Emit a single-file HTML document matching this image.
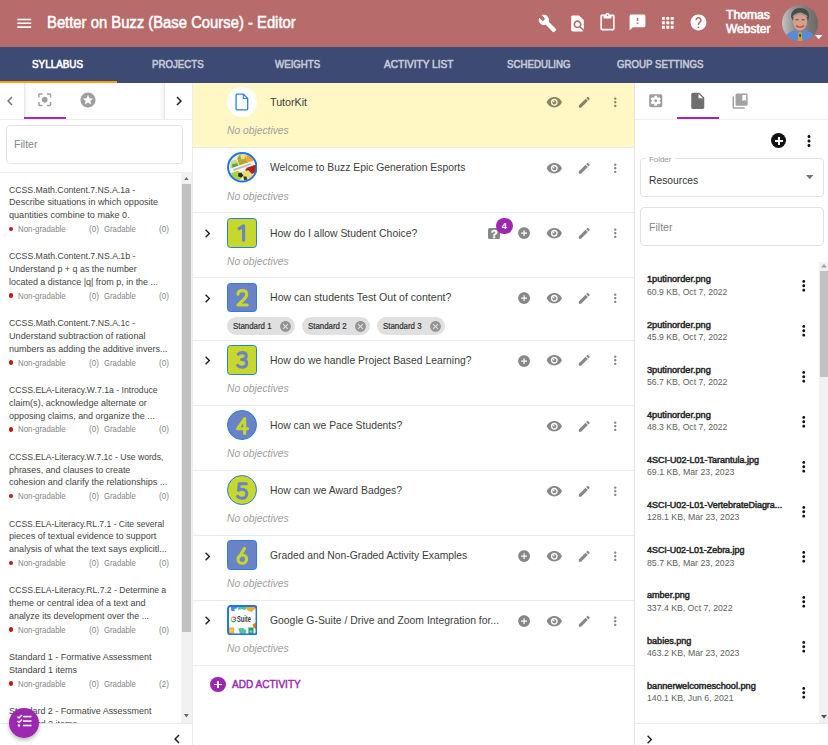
<!DOCTYPE html>
<html><head><meta charset="utf-8">
<style>
*{box-sizing:border-box;margin:0;padding:0}
html,body{width:828px;height:745px;overflow:hidden;background:#fff;font-family:"Liberation Sans",sans-serif}
body{position:relative}
.a{position:absolute}
.t{white-space:nowrap;transform-origin:0 50%}
</style></head><body>

<div class="a" style="left:0;top:0;width:828px;height:47px;background:#b76b6a"></div>
<svg class="a" style="left:14.65px;top:13.75px" width="18.5" height="18.5" viewBox="0 0 24 24"><path fill="#fff" d="M3 18h18v-2H3v2zm0-5h18v-2H3v2zm0-7v2h18V6H3z"/></svg>
<div class="a t" style="left:47.30px;top:12.86px;font-size:15.8px;line-height:20.54px;color:#fff;font-weight:normal;font-style:normal;transform:scaleX(0.9380);-webkit-text-stroke:0.5px #fff">Better on Buzz (Base Course) - Editor</div>
<svg class="a" style="left:538.10px;top:13.50px" width="19" height="19" viewBox="0 0 24 24"><path fill="#fff" d="M22.7 19l-9.1-9.1c.9-2.3.4-5-1.5-6.9-2-2-5-2.4-7.4-1.3L9 6 6 9 1.6 4.7C.4 7.1.9 10.1 2.9 12.1c1.9 1.9 4.6 2.4 6.9 1.5l9.1 9.1c.4.4 1 .4 1.4 0l2.3-2.3c.5-.4.5-1.1.1-1.4z"/></svg>
<svg class="a" style="left:568.00px;top:13.50px" width="19" height="19" viewBox="0 0 24 24"><path fill="#fff" d="M20 19.59V8l-6-6H6c-1.1 0-1.99.9-1.99 2L4 20c0 1.1.89 2 1.99 2H18c.45 0 .85-.15 1.19-.4l-4.43-4.43c-.8.52-1.740.83-2.76.83-2.76 0-5-2.24-5-5s2.24-5 5-5 5 2.24 5 5c0 1.02-.31 1.96-.83 2.75L20 19.59zM9 13c0 1.66 1.34 3 3 3s3-1.34 3-3-1.34-3-3-3-3 1.34-3 3z"/></svg>
<svg class="a" style="left:597.90px;top:12.90px" width="19" height="19" viewBox="0 0 24 24"><path fill="#fff" d="M19 2h-4.18C14.4.84 13.3 0 12 0S9.6.84 9.18 2H5c-1.1 0-2 .9-2 2v16c0 1.1.9 2 2 2h14c1.1 0 2-.9 2-2V4c0-1.1-.9-2-2-2zm-7 0c.55 0 1 .45 1 1s-.45 1-1 1-1-.45-1-1 .45-1 1-1zm7 18H5V4h2v3h10V4h2v16z"/></svg>
<svg class="a" style="left:628.40px;top:13.40px" width="19" height="19" viewBox="0 0 24 24"><path fill="#fff" d="M20 2H4c-1.1 0-1.99.9-1.99 2L2 22l4-4h14c1.1 0 2-.9 2-2V4c0-1.1-.9-2-2-2zm-7 12h-2v-2h2v2zm0-4h-2V6h2v4z"/></svg>
<svg class="a" style="left:659.20px;top:13.50px" width="17.6" height="17.6" viewBox="0 0 24 24"><path fill="#fff" d="M4 8h4V4H4v4zm6 12h4v-4h-4v4zm-6 0h4v-4H4v4zm0-6h4v-4H4v4zm6 0h4v-4h-4v4zm6-10v4h4V4h-4zm-6 4h4V4h-4v4zm6 6h4v-4h-4v4zm0 6h4v-4h-4v4z"/></svg>
<svg class="a" style="left:688.50px;top:12.90px" width="19" height="19" viewBox="0 0 24 24"><path fill="#fff" d="M12 2C6.48 2 2 6.480 2 12s4.48 10 10 10 10-4.48 10-10S17.52 2 12 2zm1 17h-2v-2h2v2zm2.07-7.75l-.9.92C13.45 12.9 13 13.5 13 15h-2v-.5c0-1.1.45-2.1 1.17-2.830l1.24-1.26c.37-.36.59-.86.59-1.41 0-1.1-.9-2-2-2s-2 .9-2 2H8c0-2.21 1.79-4 4-4s4 1.79 4 4c0 .88-.36 1.68-.93 2.25z"/></svg>
<div class="a t" style="left:725.90px;top:8.48px;font-size:12px;line-height:15.6px;color:#fff;font-weight:normal;font-style:normal;transform:scaleX(1.0124);-webkit-text-stroke:0.6px #fff">Thomas</div>
<div class="a t" style="left:725.90px;top:22.18px;font-size:12px;line-height:15.6px;color:#fff;font-weight:normal;font-style:normal;transform:scaleX(0.9985);-webkit-text-stroke:0.6px #fff">Webster</div>
<svg class="a" style="left:781.6px;top:4.5px" width="36.2" height="36.2" viewBox="0 0 36 36"><defs><clipPath id="av"><circle cx="18" cy="18" r="18"/></clipPath>
<linearGradient id="avg" x1="0" x2="1"><stop offset="0" stop-color="#c4c4c4"/><stop offset=".35" stop-color="#8e8e8e"/><stop offset="1" stop-color="#6c6866"/></linearGradient></defs>
<g clip-path="url(#av)"><rect width="36" height="36" fill="url(#avg)"/>
<path d="M9 12c0-6 4-9 9-9s9 3 9 8l-1 5-2-6c-3 1-8 1-12 0l-1 6z" fill="#4c4a4a"/>
<ellipse cx="18" cy="16.5" rx="7" ry="9" fill="#d8a08c"/>
<path d="M11 12c2-4 11-4 14 0" stroke="#9a9a8a" stroke-width="1.5" fill="none"/>
<rect x="13.5" y="14" width="3" height="1.3" fill="#6a5a58"/><rect x="19.5" y="14" width="3" height="1.3" fill="#6a5a58"/>
<path d="M14 20.5q4 3 8 0" stroke="#a05a50" stroke-width="1.3" fill="none"/>
<path d="M2 36c1-7 6-10 11-11l5 3 5-3c5 1 10 4 11 11z" fill="#5a8ad6"/>
<path d="M16.5 27h3l1 9h-5z" fill="#c9a43a"/><path d="M17 29h2l-.5 3h-1z" fill="#333"/>
</g></svg>
<svg class="a" style="left:815.4px;top:34.9px" width="7.6" height="4.2" viewBox="0 0 7.6 4.2"><path d="M0 0h7.6L3.8 4.2z" fill="#fff"/></svg>
<div class="a" style="left:0;top:47px;width:828px;height:36px;background:#3d4a73"></div>
<div class="a t" style="left:31.98px;top:56.68px;font-size:10.8px;line-height:14.04px;color:#fff;font-weight:normal;font-style:normal;transform:scaleX(0.9140);-webkit-text-stroke:0.6px #fff">SYLLABUS</div>
<div class="a t" style="left:151.65px;top:56.68px;font-size:10.8px;line-height:14.04px;color:#c5c9d6;font-weight:normal;font-style:normal;transform:scaleX(0.8973);-webkit-text-stroke:0.6px #c5c9d6">PROJECTS</div>
<div class="a t" style="left:275.36px;top:56.68px;font-size:10.8px;line-height:14.04px;color:#c5c9d6;font-weight:normal;font-style:normal;transform:scaleX(0.8984);-webkit-text-stroke:0.6px #c5c9d6">WEIGHTS</div>
<div class="a t" style="left:383.76px;top:56.68px;font-size:10.8px;line-height:14.04px;color:#c5c9d6;font-weight:normal;font-style:normal;transform:scaleX(0.9360);-webkit-text-stroke:0.6px #c5c9d6">ACTIVITY LIST</div>
<div class="a t" style="left:506.72px;top:56.68px;font-size:10.8px;line-height:14.04px;color:#c5c9d6;font-weight:normal;font-style:normal;transform:scaleX(0.8976);-webkit-text-stroke:0.6px #c5c9d6">SCHEDULING</div>
<div class="a t" style="left:617.31px;top:56.68px;font-size:10.8px;line-height:14.04px;color:#c5c9d6;font-weight:normal;font-style:normal;transform:scaleX(0.8959);-webkit-text-stroke:0.6px #c5c9d6">GROUP SETTINGS</div>
<div class="a" style="left:0;top:81px;width:117px;height:2px;background:#ffa000"></div>
<div class="a" style="left:0;top:83px;width:192px;height:662px;background:#fff"></div>
<svg class="a" style="left:1.00px;top:91.50px" width="18" height="18" viewBox="0 0 24 24"><path fill="#757575" d="M15.41 7.41L14 6l-6 6 6 6 1.41-1.41L10.83 12z"/></svg>
<div class="a" style="left:23.5px;top:83px;width:6px;height:35.5px;background:linear-gradient(to right,#e2e2e2,#f4f4f4 25%,#fff)"></div>
<div class="a" style="left:159px;top:83px;width:6px;height:35.5px;background:linear-gradient(to left,#e2e2e2,#f4f4f4 25%,#fff)"></div>
<svg class="a" style="left:35.55px;top:91.05px" width="17.5" height="17.5" viewBox="0 0 24 24"><path fill="#9e9e9e" d="M12 8c-2.21 0-4 1.79-4 4s1.79 4 4 4 4-1.79 4-4-1.79-4-4-4zm-7 7H3v4c0 1.1.9 2 2 2h4v-2H5v-4zM5 5h4V3H5c-1.1 0-2 .9-2 2v4h2V5zm14-2h-4v2h4v4h2V5c0-1.1-.9-2-2-2zm0 16h-4v2h4c1.1 0 2-.9 2-2v-4h-2v4z"/></svg>
<svg class="a" style="left:78.50px;top:91.00px" width="18" height="18" viewBox="0 0 24 24"><path fill="#9e9e9e" d="M11.99 2C6.47 2 2 6.48 2 12s4.47 10 9.99 10C17.52 22 22 17.52 22 12S17.52 2 11.99 2zm4.24 16L12 15.45 7.77 18l1.12-4.81-3.73-3.23 4.92-.42L12 5l1.92 4.53 4.92.42-3.73 3.23L16.23 18z"/></svg>
<svg class="a" style="left:169.50px;top:91.50px" width="18" height="18" viewBox="0 0 24 24"><path fill="#222" d="M10 6L8.59 7.41 13.17 12l-4.58 4.59L10 18l6-6z"/></svg>
<div class="a" style="left:24px;top:116.5px;width:42px;height:2px;background:#a32cb4"></div>
<div class="a" style="left:0;top:118.5px;width:192px;height:1px;background:#ececec"></div>
<div class="a" style="left:6px;top:125px;width:177px;height:38.5px;border:1px solid #e2e2e2;border-radius:4px"></div>
<div class="a t" style="left:13.80px;top:138.16px;font-size:10.5px;line-height:13.65px;color:#868686;font-weight:normal;font-style:normal;transform:scaleX(1.0060)">Filter</div>
<div class="a" style="left:0;top:171.5px;width:181px;height:1px;background:#eee"></div>
<div class="a" style="left:181px;top:172px;width:11px;height:551px;background:#f1f1f1"></div>
<div class="a" style="left:181.5px;top:184px;width:9.5px;height:448px;background:#c1c1c1"></div>
<svg class="a" style="left:183.9px;top:176.6px" width="4.8" height="3.4" viewBox="0 0 4.8 3.4"><path d="M0 3.4h4.8L2.4 0z" fill="#6a6a6a"/></svg>
<svg class="a" style="left:183.9px;top:714.2px" width="4.8" height="3.4" viewBox="0 0 4.8 3.4"><path d="M0 0h4.8L2.4 3.4z" fill="#6a6a6a"/></svg>
<div class="a" style="left:0;top:172px;width:181px;height:551px;overflow:hidden"><div class="a" style="left:0;top:-172px;width:181px;height:745px"><div class="a t" style="left:9.00px;top:183.60px;font-size:9.3px;line-height:12.8px;color:#444;font-weight:normal;font-style:normal;transform:scaleX(0.9359)">CCSS.Math.Content.7.NS.A.1a -</div>
<div class="a t" style="left:9.00px;top:196.40px;font-size:9.3px;line-height:12.8px;color:#444;font-weight:normal;font-style:normal;transform:scaleX(0.9784)">Describe situations in which opposite</div>
<div class="a t" style="left:9.00px;top:209.20px;font-size:9.3px;line-height:12.8px;color:#444;font-weight:normal;font-style:normal;transform:scaleX(0.9772)">quantities combine to make 0.</div>
<div class="a" style="left:8.6px;top:226.50px;width:4.8px;height:4.8px;border-radius:50%;background:#c01818"></div>
<div class="a t" style="left:18.00px;top:223.99px;font-size:8.4px;line-height:10.92px;color:#858585;font-weight:normal;font-style:normal;transform:scaleX(0.9399)">Non-gradable</div>
<div class="a t" style="left:89.00px;top:223.99px;font-size:8.4px;line-height:10.92px;color:#858585;font-weight:normal;font-style:normal;transform:scaleX(0.9759)">(0)</div>
<div class="a t" style="left:104.00px;top:223.99px;font-size:8.4px;line-height:10.92px;color:#858585;font-weight:normal;font-style:normal;transform:scaleX(0.9231)">Gradable</div>
<div class="a t" style="left:158.50px;top:223.99px;font-size:8.4px;line-height:10.92px;color:#858585;font-weight:normal;font-style:normal;transform:scaleX(0.9759)">(0)</div>
<div class="a t" style="left:9.00px;top:250.40px;font-size:9.3px;line-height:12.8px;color:#444;font-weight:normal;font-style:normal;transform:scaleX(0.9370)">CCSS.Math.Content.7.NS.A.1b -</div>
<div class="a t" style="left:9.00px;top:263.20px;font-size:9.3px;line-height:12.8px;color:#444;font-weight:normal;font-style:normal;transform:scaleX(0.9564)">Understand p + q as the number</div>
<div class="a t" style="left:9.00px;top:276.00px;font-size:9.3px;line-height:12.8px;color:#444;font-weight:normal;font-style:normal;transform:scaleX(0.9634)">located a distance |q| from p, in the ...</div>
<div class="a" style="left:8.6px;top:293.30px;width:4.8px;height:4.8px;border-radius:50%;background:#c01818"></div>
<div class="a t" style="left:18.00px;top:290.79px;font-size:8.4px;line-height:10.92px;color:#858585;font-weight:normal;font-style:normal;transform:scaleX(0.9399)">Non-gradable</div>
<div class="a t" style="left:89.00px;top:290.79px;font-size:8.4px;line-height:10.92px;color:#858585;font-weight:normal;font-style:normal;transform:scaleX(0.9759)">(0)</div>
<div class="a t" style="left:104.00px;top:290.79px;font-size:8.4px;line-height:10.92px;color:#858585;font-weight:normal;font-style:normal;transform:scaleX(0.9231)">Gradable</div>
<div class="a t" style="left:158.50px;top:290.79px;font-size:8.4px;line-height:10.92px;color:#858585;font-weight:normal;font-style:normal;transform:scaleX(0.9759)">(0)</div>
<div class="a t" style="left:9.00px;top:317.20px;font-size:9.3px;line-height:12.8px;color:#444;font-weight:normal;font-style:normal;transform:scaleX(0.9381)">CCSS.Math.Content.7.NS.A.1c -</div>
<div class="a t" style="left:9.00px;top:330.00px;font-size:9.3px;line-height:12.8px;color:#444;font-weight:normal;font-style:normal;transform:scaleX(0.9787)">Understand subtraction of rational</div>
<div class="a t" style="left:9.00px;top:342.80px;font-size:9.3px;line-height:12.8px;color:#444;font-weight:normal;font-style:normal;transform:scaleX(0.9640)">numbers as adding the additive invers...</div>
<div class="a" style="left:8.6px;top:360.10px;width:4.8px;height:4.8px;border-radius:50%;background:#c01818"></div>
<div class="a t" style="left:18.00px;top:357.59px;font-size:8.4px;line-height:10.92px;color:#858585;font-weight:normal;font-style:normal;transform:scaleX(0.9399)">Non-gradable</div>
<div class="a t" style="left:89.00px;top:357.59px;font-size:8.4px;line-height:10.92px;color:#858585;font-weight:normal;font-style:normal;transform:scaleX(0.9759)">(0)</div>
<div class="a t" style="left:104.00px;top:357.59px;font-size:8.4px;line-height:10.92px;color:#858585;font-weight:normal;font-style:normal;transform:scaleX(0.9231)">Gradable</div>
<div class="a t" style="left:158.50px;top:357.59px;font-size:8.4px;line-height:10.92px;color:#858585;font-weight:normal;font-style:normal;transform:scaleX(0.9759)">(0)</div>
<div class="a t" style="left:9.00px;top:384.00px;font-size:9.3px;line-height:12.8px;color:#444;font-weight:normal;font-style:normal;transform:scaleX(0.9321)">CCSS.ELA-Literacy.W.7.1a - Introduce</div>
<div class="a t" style="left:9.00px;top:396.80px;font-size:9.3px;line-height:12.8px;color:#444;font-weight:normal;font-style:normal;transform:scaleX(0.9724)">claim(s), acknowledge alternate or</div>
<div class="a t" style="left:9.00px;top:409.60px;font-size:9.3px;line-height:12.8px;color:#444;font-weight:normal;font-style:normal;transform:scaleX(0.9625)">opposing claims, and organize the ...</div>
<div class="a" style="left:8.6px;top:426.90px;width:4.8px;height:4.8px;border-radius:50%;background:#c01818"></div>
<div class="a t" style="left:18.00px;top:424.39px;font-size:8.4px;line-height:10.92px;color:#858585;font-weight:normal;font-style:normal;transform:scaleX(0.9399)">Non-gradable</div>
<div class="a t" style="left:89.00px;top:424.39px;font-size:8.4px;line-height:10.92px;color:#858585;font-weight:normal;font-style:normal;transform:scaleX(0.9759)">(0)</div>
<div class="a t" style="left:104.00px;top:424.39px;font-size:8.4px;line-height:10.92px;color:#858585;font-weight:normal;font-style:normal;transform:scaleX(0.9231)">Gradable</div>
<div class="a t" style="left:158.50px;top:424.39px;font-size:8.4px;line-height:10.92px;color:#858585;font-weight:normal;font-style:normal;transform:scaleX(0.9759)">(0)</div>
<div class="a t" style="left:9.00px;top:450.80px;font-size:9.3px;line-height:12.8px;color:#444;font-weight:normal;font-style:normal;transform:scaleX(0.9258)">CCSS.ELA-Literacy.W.7.1c - Use words,</div>
<div class="a t" style="left:9.00px;top:463.60px;font-size:9.3px;line-height:12.8px;color:#444;font-weight:normal;font-style:normal;transform:scaleX(0.9581)">phrases, and clauses to create</div>
<div class="a t" style="left:9.00px;top:476.40px;font-size:9.3px;line-height:12.8px;color:#444;font-weight:normal;font-style:normal;transform:scaleX(0.9726)">cohesion and clarify the relationships ...</div>
<div class="a" style="left:8.6px;top:493.70px;width:4.8px;height:4.8px;border-radius:50%;background:#c01818"></div>
<div class="a t" style="left:18.00px;top:491.19px;font-size:8.4px;line-height:10.92px;color:#858585;font-weight:normal;font-style:normal;transform:scaleX(0.9399)">Non-gradable</div>
<div class="a t" style="left:89.00px;top:491.19px;font-size:8.4px;line-height:10.92px;color:#858585;font-weight:normal;font-style:normal;transform:scaleX(0.9759)">(0)</div>
<div class="a t" style="left:104.00px;top:491.19px;font-size:8.4px;line-height:10.92px;color:#858585;font-weight:normal;font-style:normal;transform:scaleX(0.9231)">Gradable</div>
<div class="a t" style="left:158.50px;top:491.19px;font-size:8.4px;line-height:10.92px;color:#858585;font-weight:normal;font-style:normal;transform:scaleX(0.9759)">(0)</div>
<div class="a t" style="left:9.00px;top:517.60px;font-size:9.3px;line-height:12.8px;color:#444;font-weight:normal;font-style:normal;transform:scaleX(0.9219)">CCSS.ELA-Literacy.RL.7.1 - Cite several</div>
<div class="a t" style="left:9.00px;top:530.40px;font-size:9.3px;line-height:12.8px;color:#444;font-weight:normal;font-style:normal;transform:scaleX(0.9761)">pieces of textual evidence to support</div>
<div class="a t" style="left:9.00px;top:543.20px;font-size:9.3px;line-height:12.8px;color:#444;font-weight:normal;font-style:normal;transform:scaleX(0.9760)">analysis of what the text says explicitl...</div>
<div class="a" style="left:8.6px;top:560.50px;width:4.8px;height:4.8px;border-radius:50%;background:#c01818"></div>
<div class="a t" style="left:18.00px;top:557.99px;font-size:8.4px;line-height:10.92px;color:#858585;font-weight:normal;font-style:normal;transform:scaleX(0.9399)">Non-gradable</div>
<div class="a t" style="left:89.00px;top:557.99px;font-size:8.4px;line-height:10.92px;color:#858585;font-weight:normal;font-style:normal;transform:scaleX(0.9759)">(0)</div>
<div class="a t" style="left:104.00px;top:557.99px;font-size:8.4px;line-height:10.92px;color:#858585;font-weight:normal;font-style:normal;transform:scaleX(0.9231)">Gradable</div>
<div class="a t" style="left:158.50px;top:557.99px;font-size:8.4px;line-height:10.92px;color:#858585;font-weight:normal;font-style:normal;transform:scaleX(0.9759)">(0)</div>
<div class="a t" style="left:9.00px;top:584.40px;font-size:9.3px;line-height:12.8px;color:#444;font-weight:normal;font-style:normal;transform:scaleX(0.9253)">CCSS.ELA-Literacy.RL.7.2 - Determine a</div>
<div class="a t" style="left:9.00px;top:597.20px;font-size:9.3px;line-height:12.8px;color:#444;font-weight:normal;font-style:normal;transform:scaleX(0.9683)">theme or central idea of a text and</div>
<div class="a t" style="left:9.00px;top:610.00px;font-size:9.3px;line-height:12.8px;color:#444;font-weight:normal;font-style:normal;transform:scaleX(0.9578)">analyze its development over the ...</div>
<div class="a" style="left:8.6px;top:627.30px;width:4.8px;height:4.8px;border-radius:50%;background:#c01818"></div>
<div class="a t" style="left:18.00px;top:624.79px;font-size:8.4px;line-height:10.92px;color:#858585;font-weight:normal;font-style:normal;transform:scaleX(0.9399)">Non-gradable</div>
<div class="a t" style="left:89.00px;top:624.79px;font-size:8.4px;line-height:10.92px;color:#858585;font-weight:normal;font-style:normal;transform:scaleX(0.9759)">(0)</div>
<div class="a t" style="left:104.00px;top:624.79px;font-size:8.4px;line-height:10.92px;color:#858585;font-weight:normal;font-style:normal;transform:scaleX(0.9231)">Gradable</div>
<div class="a t" style="left:158.50px;top:624.79px;font-size:8.4px;line-height:10.92px;color:#858585;font-weight:normal;font-style:normal;transform:scaleX(0.9759)">(0)</div>
<div class="a t" style="left:9.00px;top:651.20px;font-size:9.3px;line-height:12.8px;color:#444;font-weight:normal;font-style:normal;transform:scaleX(0.9640)">Standard 1 - Formative Assessment</div>
<div class="a t" style="left:9.00px;top:664.00px;font-size:9.3px;line-height:12.8px;color:#444;font-weight:normal;font-style:normal;transform:scaleX(0.9691)">Standard 1 items</div>
<div class="a" style="left:8.6px;top:681.30px;width:4.8px;height:4.8px;border-radius:50%;background:#c01818"></div>
<div class="a t" style="left:18.00px;top:678.79px;font-size:8.4px;line-height:10.92px;color:#858585;font-weight:normal;font-style:normal;transform:scaleX(0.9399)">Non-gradable</div>
<div class="a t" style="left:89.00px;top:678.79px;font-size:8.4px;line-height:10.92px;color:#858585;font-weight:normal;font-style:normal;transform:scaleX(0.9759)">(0)</div>
<div class="a t" style="left:104.00px;top:678.79px;font-size:8.4px;line-height:10.92px;color:#858585;font-weight:normal;font-style:normal;transform:scaleX(0.9231)">Gradable</div>
<div class="a t" style="left:158.50px;top:678.79px;font-size:8.4px;line-height:10.92px;color:#858585;font-weight:normal;font-style:normal;transform:scaleX(0.9759)">(2)</div>
<div class="a t" style="left:9.00px;top:705.20px;font-size:9.3px;line-height:12.8px;color:#444;font-weight:normal;font-style:normal;transform:scaleX(0.9640)">Standard 2 - Formative Assessment</div>
<div class="a t" style="left:9.00px;top:718.00px;font-size:9.3px;line-height:12.8px;color:#444;font-weight:normal;font-style:normal;transform:scaleX(0.9691)">Standard 2 items</div>
<div class="a" style="left:8.6px;top:735.30px;width:4.8px;height:4.8px;border-radius:50%;background:#c01818"></div>
<div class="a t" style="left:18.00px;top:732.79px;font-size:8.4px;line-height:10.92px;color:#858585;font-weight:normal;font-style:normal;transform:scaleX(0.9399)">Non-gradable</div>
<div class="a t" style="left:89.00px;top:732.79px;font-size:8.4px;line-height:10.92px;color:#858585;font-weight:normal;font-style:normal;transform:scaleX(0.9759)">(0)</div>
<div class="a t" style="left:104.00px;top:732.79px;font-size:8.4px;line-height:10.92px;color:#858585;font-weight:normal;font-style:normal;transform:scaleX(0.9231)">Gradable</div>
<div class="a t" style="left:158.50px;top:732.79px;font-size:8.4px;line-height:10.92px;color:#858585;font-weight:normal;font-style:normal;transform:scaleX(0.9759)">(0)</div></div></div>
<div class="a" style="left:0;top:723px;width:192px;height:1px;background:#e8e8e8"></div>
<svg class="a" style="left:168.00px;top:729.50px" width="18" height="18" viewBox="0 0 24 24"><path fill="#222" d="M15.41 7.41L14 6l-6 6 6 6 1.41-1.41L10.83 12z"/></svg>
<div class="a" style="left:8.7px;top:708.2px;width:30px;height:30px;border-radius:50%;background:#9c27b0;box-shadow:0 2px 4px rgba(0,0,0,.3)"></div>
<svg class="a" style="left:16.5px;top:714px" width="15" height="13" viewBox="0 0 15 13"><path d="M0.5 2.5l1.5 1.5 3-3" stroke="#fff" stroke-width="1.4" fill="none"/><path d="M0.5 7l1.5 1.5 3-3" stroke="#fff" stroke-width="1.4" fill="none"/><circle cx="2" cy="11.5" r="1.2" fill="#fff"/><rect x="6" y="1.8" width="8.5" height="1.6" fill="#fff"/><rect x="6" y="6.3" width="8.5" height="1.6" fill="#fff"/><rect x="6" y="10.7" width="8.5" height="1.6" fill="#fff"/></svg>
<div class="a" style="left:192px;top:83px;width:1px;height:662px;background:#ebebeb"></div>
<div class="a" style="left:193px;top:83px;width:441px;height:64.4px;background:#fff8c5"></div>
<div class="a" style="left:634px;top:83px;width:1px;height:662px;background:#e4e4e8"></div>
<div class="a" style="left:193px;top:146.90px;width:441px;height:1px;background:#ebebeb"></div>
<div class="a" style="left:193px;top:212.10px;width:441px;height:1px;background:#ebebeb"></div>
<div class="a" style="left:193px;top:277.30px;width:441px;height:1px;background:#ebebeb"></div>
<div class="a" style="left:193px;top:339.50px;width:441px;height:1px;background:#ebebeb"></div>
<div class="a" style="left:193px;top:404.80px;width:441px;height:1px;background:#ebebeb"></div>
<div class="a" style="left:193px;top:469.80px;width:441px;height:1px;background:#ebebeb"></div>
<div class="a" style="left:193px;top:534.80px;width:441px;height:1px;background:#ebebeb"></div>
<div class="a" style="left:193px;top:599.80px;width:441px;height:1px;background:#ebebeb"></div>
<div class="a" style="left:193px;top:664.80px;width:441px;height:1px;background:#ebebeb"></div>
<div class="a" style="left:227.2px;top:87.10px;width:29.8px;height:29.8px;border-radius:50%;background:#fff"></div>
<svg class="a" style="left:235.3px;top:92.80px" width="14" height="18" viewBox="0 0 14 18"><path d="M2.2 1.2h6.3l4.2 4.2v10.3c0 .6-.5 1.1-1.1 1.1H2.2c-.6 0-1.1-.5-1.1-1.1V2.3c0-.6.5-1.1 1.1-1.1z" fill="none" stroke="#2f7fe0" stroke-width="1.3" stroke-linejoin="round"/><path d="M8.3 1.2v4.3h4.3" fill="none" stroke="#2f7fe0" stroke-width="1.1"/></svg>
<div class="a t" style="left:269.50px;top:95.86px;font-size:10.5px;line-height:13.65px;color:#3c3c3c;font-weight:normal;font-style:normal;transform:scaleX(1.0179)">TutorKit</div>
<div class="a t" style="left:227.20px;top:124.26px;font-size:10.5px;line-height:13.65px;color:#9e9e9e;font-weight:normal;font-style:italic;transform:scaleX(0.9785)">No objectives</div>
<svg class="a" style="left:546.40px;top:94.40px" width="16.6" height="16.6" viewBox="0 0 24 24"><path fill="rgba(0,0,0,.47)" d="M12 4.5C7 4.5 2.73 7.61 1 12c1.73 4.39 6 7.5 11 7.5s9.27-3.11 11-7.5c-1.73-4.39-6-7.5-11-7.5zM12 17c-2.76 0-5-2.24-5-5s2.24-5 5-5 5 2.24 5 5-2.24 5-5 5zm0-8c-1.66 0-3 1.34-3 3s1.34 3 3 3 3-1.34 3-3-1.34-3-3-3z"/><circle cx="10.9" cy="10.7" r="1.3" fill="#fff8c5"/></svg>
<svg class="a" style="left:577.20px;top:95.40px" width="14.6" height="14.6" viewBox="0 0 24 24"><path fill="rgba(0,0,0,.47)" d="M3 17.25V21h3.75L17.81 9.94l-3.75-3.75L3 17.25zM20.71 7.04c.39-.39.39-1.02 0-1.41l-2.34-2.34c-.39-.39-1.02-.39-1.41 0l-1.83 1.83 3.75 3.75 1.83-1.83z"/></svg>
<svg class="a" style="left:607.65px;top:95.45px" width="14.5" height="14.5" viewBox="0 0 24 24"><path fill="rgba(0,0,0,.47)" d="M12 8c1.1 0 2-.9 2-2s-.9-2-2-2-2 .9-2 2 .9 2 2 2zm0 2c-1.1 0-2 .9-2 2s.9 2 2 2 2-.9 2-2-.9-2-2-2zm0 6c-1.1 0-2 .9-2 2s.9 2 2 2 2-.9 2-2-.9-2-2-2z"/></svg>
<svg class="a" style="left:226.8px;top:152.00px" width="30.6" height="30.6" viewBox="0 0 30 30"><defs><clipPath id="wc"><circle cx="15" cy="15" r="14"/></clipPath></defs><g clip-path="url(#wc)"><rect width="30" height="30" fill="#f3f0e0"/><path d="M4 9l4-2 3 3 1 6-5 3-4-3z" fill="#c9d88a"/><path d="M5 12l5-1 2 4-3 3-4-2z" fill="#5aa83a"/><path d="M10 6l3-4 2 3 3-2 1 4 3 1-2 4-8 1z" fill="#b3a636"/><path d="M13 3l2-1 3 2-1 3-3 0z" fill="#e8e27a"/><path d="M19 3l4 1 3 4-2 3-5-2z" fill="#f5a52a"/><path d="M19 14l6-3 4 2 0 6-5 3-5-2z" fill="#b0241a"/><path d="M18 17l4 0 0 5-3 1z" fill="#7a3020"/><path d="M4 20l5-3 4 3 2 5-4 4-6-2z" fill="#a8d040"/><path d="M15 19l6-1 4 4-1 5-6 2-3-4z" fill="#e6dc78"/><path d="M11 21l3-1 2 3-2 2-3-1z" fill="#2a2a2a"/><path d="M16 24l3 0 1 3-3 1z" fill="#3a3a3a"/><path d="M1 17l26-9 2 4-26 9z" fill="#f6f4f0"/><path d="M6 17l17-6 .6 1.6-17 6z" fill="#8a8a8a" opacity=".55"/><path d="M0 19l4 2 0 4-3 1z" fill="#3fa0a0"/></g><circle cx="15" cy="15" r="14" fill="none" stroke="#1f74e0" stroke-width="1.9"/></svg>
<div class="a t" style="left:269.50px;top:161.26px;font-size:10.5px;line-height:13.65px;color:#3c3c3c;font-weight:normal;font-style:normal;transform:scaleX(0.9858)">Welcome to Buzz Epic Generation Esports</div>
<div class="a t" style="left:227.20px;top:189.66px;font-size:10.5px;line-height:13.65px;color:#9e9e9e;font-weight:normal;font-style:italic;transform:scaleX(0.9785)">No objectives</div>
<svg class="a" style="left:546.40px;top:159.80px" width="16.6" height="16.6" viewBox="0 0 24 24"><path fill="rgba(0,0,0,.47)" d="M12 4.5C7 4.5 2.73 7.61 1 12c1.73 4.39 6 7.5 11 7.5s9.27-3.11 11-7.5c-1.73-4.39-6-7.5-11-7.5zM12 17c-2.76 0-5-2.24-5-5s2.24-5 5-5 5 2.24 5 5-2.24 5-5 5zm0-8c-1.66 0-3 1.34-3 3s1.34 3 3 3 3-1.34 3-3-1.34-3-3-3z"/><circle cx="10.9" cy="10.7" r="1.3" fill="#fff"/></svg>
<svg class="a" style="left:577.20px;top:160.80px" width="14.6" height="14.6" viewBox="0 0 24 24"><path fill="rgba(0,0,0,.47)" d="M3 17.25V21h3.75L17.81 9.94l-3.75-3.75L3 17.25zM20.71 7.04c.39-.39.39-1.02 0-1.41l-2.34-2.34c-.39-.39-1.02-.39-1.41 0l-1.83 1.83 3.75 3.75 1.83-1.83z"/></svg>
<svg class="a" style="left:607.65px;top:160.85px" width="14.5" height="14.5" viewBox="0 0 24 24"><path fill="rgba(0,0,0,.47)" d="M12 8c1.1 0 2-.9 2-2s-.9-2-2-2-2 .9-2 2 .9 2 2 2zm0 2c-1.1 0-2 .9-2 2s.9 2 2 2 2-.9 2-2-.9-2-2-2zm0 6c-1.1 0-2 .9-2 2s.9 2 2 2 2-.9 2-2-.9-2-2-2z"/></svg>
<svg class="a" style="left:199.20px;top:225.00px" width="17" height="17" viewBox="0 0 24 24"><path fill="#222" d="M10 6L8.59 7.41 13.17 12l-4.58 4.59L10 18l6-6z"/></svg>
<div class="a" style="left:227.2px;top:217.80px;width:29.8px;height:29.8px;border-radius:3.5px;border:1.9px solid #2b7de0;background:#c6d82c"></div>
<svg class="a" style="left:235.6px;top:224.00px" width="13" height="18" viewBox="0 0 13 18"><path d="M3.2 4.6 L7.6 1.8 V16.2" fill="none" stroke="#6a83c6" stroke-width="3.1" stroke-linecap="round" stroke-linejoin="round"/></svg>
<div class="a t" style="left:269.50px;top:226.56px;font-size:10.5px;line-height:13.65px;color:#3c3c3c;font-weight:normal;font-style:normal;transform:scaleX(0.9892)">How do I allow Student Choice?</div>
<div class="a t" style="left:227.20px;top:254.96px;font-size:10.5px;line-height:13.65px;color:#9e9e9e;font-weight:normal;font-style:italic;transform:scaleX(0.9785)">No objectives</div>
<div class="a" style="left:488px;top:227.80px;width:12.3px;height:11.4px;border-radius:1.5px;background:#868686;color:#fff;font-size:11.5px;font-weight:bold;line-height:12px;text-align:center;-webkit-text-stroke:.3px #fff">?</div>
<div class="a" style="left:496px;top:217.70px;width:16.5px;height:16.5px;border-radius:50%;background:#9c27b0;color:#fff;font-size:9px;font-weight:bold;line-height:16.5px;text-align:center">4</div>
<svg class="a" style="left:517.40px;top:226.30px" width="14.2" height="14.2" viewBox="0 0 24 24"><path fill="rgba(0,0,0,.47)" d="M12 2C6.48 2 2 6.48 2 12s4.48 10 10 10 10-4.48 10-10S17.52 2 12 2zm5 11h-4v4h-2v-4H7v-2h4V7h2v4h4v2z"/></svg>
<svg class="a" style="left:546.40px;top:225.10px" width="16.6" height="16.6" viewBox="0 0 24 24"><path fill="rgba(0,0,0,.47)" d="M12 4.5C7 4.5 2.73 7.61 1 12c1.73 4.39 6 7.5 11 7.5s9.27-3.11 11-7.5c-1.73-4.39-6-7.5-11-7.5zM12 17c-2.76 0-5-2.24-5-5s2.24-5 5-5 5 2.24 5 5-2.24 5-5 5zm0-8c-1.66 0-3 1.34-3 3s1.34 3 3 3 3-1.34 3-3-1.34-3-3-3z"/><circle cx="10.9" cy="10.7" r="1.3" fill="#fff"/></svg>
<svg class="a" style="left:577.20px;top:226.10px" width="14.6" height="14.6" viewBox="0 0 24 24"><path fill="rgba(0,0,0,.47)" d="M3 17.25V21h3.75L17.81 9.94l-3.75-3.75L3 17.25zM20.71 7.04c.39-.39.39-1.02 0-1.41l-2.34-2.34c-.39-.39-1.02-.39-1.41 0l-1.83 1.83 3.75 3.75 1.83-1.83z"/></svg>
<svg class="a" style="left:607.65px;top:226.15px" width="14.5" height="14.5" viewBox="0 0 24 24"><path fill="rgba(0,0,0,.47)" d="M12 8c1.1 0 2-.9 2-2s-.9-2-2-2-2 .9-2 2 .9 2 2 2zm0 2c-1.1 0-2 .9-2 2s.9 2 2 2 2-.9 2-2-.9-2-2-2zm0 6c-1.1 0-2 .9-2 2s.9 2 2 2 2-.9 2-2-.9-2-2-2z"/></svg>
<svg class="a" style="left:199.20px;top:289.90px" width="17" height="17" viewBox="0 0 24 24"><path fill="#222" d="M10 6L8.59 7.41 13.17 12l-4.58 4.59L10 18l6-6z"/></svg>
<div class="a" style="left:227.2px;top:282.70px;width:29.8px;height:29.8px;border-radius:3.5px;border:1.9px solid #2b7de0;background:#6a83c6"></div>
<svg class="a" style="left:235.6px;top:288.90px" width="13" height="18" viewBox="0 0 13 18"><path d="M2 5.2 C2 2.9 3.9 1.6 6.3 1.6 C8.9 1.6 10.7 3.1 10.7 5.4 C10.7 7.9 8.5 9.9 2 16 H11.2" fill="none" stroke="#c6d82c" stroke-width="3.1" stroke-linecap="round" stroke-linejoin="round"/></svg>
<div class="a t" style="left:269.50px;top:291.46px;font-size:10.5px;line-height:13.65px;color:#3c3c3c;font-weight:normal;font-style:normal;transform:scaleX(1.0065)">How can students Test Out of content?</div>
<div class="a" style="left:227.2px;top:316.8px;width:68px;height:18.2px;border-radius:9px;background:#e0e0e0"></div>
<div class="a t" style="left:233.00px;top:321.09px;font-size:8.4px;line-height:10.92px;color:#2e2e2e;font-weight:normal;font-style:normal;transform:scaleX(0.9399);-webkit-text-stroke:.2px #2e2e2e">Standard 1</div>
<svg class="a" style="left:279.30px;top:319.50px" width="13" height="13" viewBox="0 0 24 24"><path fill="#959595" d="M12 2C6.47 2 2 6.47 2 12s4.47 10 10 10 10-4.47 10-10S17.53 2 12 2zm5 13.59L15.59 17 12 13.410 8.41 17 7 15.59 10.59 12 7 8.41 8.41 7 12 10.59 15.59 7 17 8.41 13.41 12 17 15.59z"/></svg>
<div class="a" style="left:302.2px;top:316.8px;width:68px;height:18.2px;border-radius:9px;background:#e0e0e0"></div>
<div class="a t" style="left:308.00px;top:321.09px;font-size:8.4px;line-height:10.92px;color:#2e2e2e;font-weight:normal;font-style:normal;transform:scaleX(0.9399);-webkit-text-stroke:.2px #2e2e2e">Standard 2</div>
<svg class="a" style="left:354.30px;top:319.50px" width="13" height="13" viewBox="0 0 24 24"><path fill="#959595" d="M12 2C6.47 2 2 6.47 2 12s4.47 10 10 10 10-4.47 10-10S17.53 2 12 2zm5 13.59L15.59 17 12 13.410 8.41 17 7 15.59 10.59 12 7 8.41 8.41 7 12 10.59 15.59 7 17 8.41 13.41 12 17 15.59z"/></svg>
<div class="a" style="left:377px;top:316.8px;width:68px;height:18.2px;border-radius:9px;background:#e0e0e0"></div>
<div class="a t" style="left:382.80px;top:321.09px;font-size:8.4px;line-height:10.92px;color:#2e2e2e;font-weight:normal;font-style:normal;transform:scaleX(0.9399);-webkit-text-stroke:.2px #2e2e2e">Standard 3</div>
<svg class="a" style="left:429.10px;top:319.50px" width="13" height="13" viewBox="0 0 24 24"><path fill="#959595" d="M12 2C6.47 2 2 6.47 2 12s4.47 10 10 10 10-4.47 10-10S17.53 2 12 2zm5 13.59L15.59 17 12 13.410 8.41 17 7 15.59 10.59 12 7 8.41 8.41 7 12 10.59 15.59 7 17 8.41 13.41 12 17 15.59z"/></svg>
<svg class="a" style="left:517.40px;top:291.20px" width="14.2" height="14.2" viewBox="0 0 24 24"><path fill="rgba(0,0,0,.47)" d="M12 2C6.48 2 2 6.48 2 12s4.48 10 10 10 10-4.48 10-10S17.52 2 12 2zm5 11h-4v4h-2v-4H7v-2h4V7h2v4h4v2z"/></svg>
<svg class="a" style="left:546.40px;top:290.00px" width="16.6" height="16.6" viewBox="0 0 24 24"><path fill="rgba(0,0,0,.47)" d="M12 4.5C7 4.5 2.73 7.61 1 12c1.73 4.39 6 7.5 11 7.5s9.27-3.11 11-7.5c-1.73-4.39-6-7.5-11-7.5zM12 17c-2.76 0-5-2.24-5-5s2.24-5 5-5 5 2.24 5 5-2.24 5-5 5zm0-8c-1.66 0-3 1.34-3 3s1.34 3 3 3 3-1.34 3-3-1.34-3-3-3z"/><circle cx="10.9" cy="10.7" r="1.3" fill="#fff"/></svg>
<svg class="a" style="left:577.20px;top:291.00px" width="14.6" height="14.6" viewBox="0 0 24 24"><path fill="rgba(0,0,0,.47)" d="M3 17.25V21h3.75L17.81 9.94l-3.75-3.75L3 17.25zM20.71 7.04c.39-.39.39-1.02 0-1.41l-2.34-2.34c-.39-.39-1.02-.39-1.41 0l-1.83 1.83 3.75 3.75 1.83-1.83z"/></svg>
<svg class="a" style="left:607.65px;top:291.05px" width="14.5" height="14.5" viewBox="0 0 24 24"><path fill="rgba(0,0,0,.47)" d="M12 8c1.1 0 2-.9 2-2s-.9-2-2-2-2 .9-2 2 .9 2 2 2zm0 2c-1.1 0-2 .9-2 2s.9 2 2 2 2-.9 2-2-.9-2-2-2zm0 6c-1.1 0-2 .9-2 2s.9 2 2 2 2-.9 2-2-.9-2-2-2z"/></svg>
<svg class="a" style="left:199.20px;top:352.25px" width="17" height="17" viewBox="0 0 24 24"><path fill="#222" d="M10 6L8.59 7.41 13.17 12l-4.58 4.59L10 18l6-6z"/></svg>
<div class="a" style="left:227.2px;top:345.05px;width:29.8px;height:29.8px;border-radius:3.5px;border:1.9px solid #2b7de0;background:#c6d82c"></div>
<svg class="a" style="left:235.6px;top:351.25px" width="13" height="18" viewBox="0 0 13 18"><path d="M2.2 3.2 C3.2 2.1 4.6 1.6 6.2 1.6 C8.7 1.6 10.3 3 10.3 5 C10.3 7.1 8.6 8.5 5.6 8.5 C8.8 8.5 10.7 10 10.7 12.3 C10.7 14.8 8.7 16.3 6.1 16.3 C4.3 16.3 2.8 15.7 1.7 14.4" fill="none" stroke="#6a83c6" stroke-width="3.1" stroke-linecap="round" stroke-linejoin="round"/></svg>
<div class="a t" style="left:269.50px;top:353.81px;font-size:10.5px;line-height:13.65px;color:#3c3c3c;font-weight:normal;font-style:normal;transform:scaleX(0.9860)">How do we handle Project Based Learning?</div>
<div class="a t" style="left:227.20px;top:382.21px;font-size:10.5px;line-height:13.65px;color:#9e9e9e;font-weight:normal;font-style:italic;transform:scaleX(0.9785)">No objectives</div>
<svg class="a" style="left:517.40px;top:353.55px" width="14.2" height="14.2" viewBox="0 0 24 24"><path fill="rgba(0,0,0,.47)" d="M12 2C6.48 2 2 6.48 2 12s4.48 10 10 10 10-4.48 10-10S17.52 2 12 2zm5 11h-4v4h-2v-4H7v-2h4V7h2v4h4v2z"/></svg>
<svg class="a" style="left:546.40px;top:352.35px" width="16.6" height="16.6" viewBox="0 0 24 24"><path fill="rgba(0,0,0,.47)" d="M12 4.5C7 4.5 2.73 7.61 1 12c1.73 4.39 6 7.5 11 7.5s9.27-3.11 11-7.5c-1.73-4.39-6-7.5-11-7.5zM12 17c-2.76 0-5-2.24-5-5s2.24-5 5-5 5 2.24 5 5-2.24 5-5 5zm0-8c-1.66 0-3 1.34-3 3s1.34 3 3 3 3-1.34 3-3-1.34-3-3-3z"/><circle cx="10.9" cy="10.7" r="1.3" fill="#fff"/></svg>
<svg class="a" style="left:577.20px;top:353.35px" width="14.6" height="14.6" viewBox="0 0 24 24"><path fill="rgba(0,0,0,.47)" d="M3 17.25V21h3.75L17.81 9.94l-3.75-3.75L3 17.25zM20.71 7.04c.39-.39.39-1.02 0-1.41l-2.34-2.34c-.39-.39-1.02-.39-1.41 0l-1.83 1.83 3.75 3.75 1.83-1.83z"/></svg>
<svg class="a" style="left:607.65px;top:353.40px" width="14.5" height="14.5" viewBox="0 0 24 24"><path fill="rgba(0,0,0,.47)" d="M12 8c1.1 0 2-.9 2-2s-.9-2-2-2-2 .9-2 2 .9 2 2 2zm0 2c-1.1 0-2 .9-2 2s.9 2 2 2 2-.9 2-2-.9-2-2-2zm0 6c-1.1 0-2 .9-2 2s.9 2 2 2 2-.9 2-2-.9-2-2-2z"/></svg>
<div class="a" style="left:227.2px;top:410.30px;width:29.8px;height:29.8px;border-radius:50%;border:1.9px solid #2b7de0;background:#6a83c6"></div>
<svg class="a" style="left:235.6px;top:416.50px" width="13" height="18" viewBox="0 0 13 18"><path d="M8.7 16.4 V1.6 L1.5 11.8 H11.6" fill="none" stroke="#c6d82c" stroke-width="3.1" stroke-linecap="round" stroke-linejoin="round"/></svg>
<div class="a t" style="left:269.50px;top:419.06px;font-size:10.5px;line-height:13.65px;color:#3c3c3c;font-weight:normal;font-style:normal;transform:scaleX(0.9845)">How can we Pace Students?</div>
<div class="a t" style="left:227.20px;top:447.46px;font-size:10.5px;line-height:13.65px;color:#9e9e9e;font-weight:normal;font-style:italic;transform:scaleX(0.9785)">No objectives</div>
<svg class="a" style="left:546.40px;top:417.60px" width="16.6" height="16.6" viewBox="0 0 24 24"><path fill="rgba(0,0,0,.47)" d="M12 4.5C7 4.5 2.73 7.61 1 12c1.73 4.39 6 7.5 11 7.5s9.27-3.11 11-7.5c-1.73-4.39-6-7.5-11-7.5zM12 17c-2.76 0-5-2.24-5-5s2.24-5 5-5 5 2.24 5 5-2.24 5-5 5zm0-8c-1.66 0-3 1.34-3 3s1.34 3 3 3 3-1.34 3-3-1.34-3-3-3z"/><circle cx="10.9" cy="10.7" r="1.3" fill="#fff"/></svg>
<svg class="a" style="left:577.20px;top:418.60px" width="14.6" height="14.6" viewBox="0 0 24 24"><path fill="rgba(0,0,0,.47)" d="M3 17.25V21h3.75L17.81 9.94l-3.75-3.75L3 17.25zM20.71 7.04c.39-.39.39-1.02 0-1.41l-2.34-2.34c-.39-.39-1.02-.39-1.41 0l-1.83 1.83 3.75 3.75 1.83-1.83z"/></svg>
<svg class="a" style="left:607.65px;top:418.65px" width="14.5" height="14.5" viewBox="0 0 24 24"><path fill="rgba(0,0,0,.47)" d="M12 8c1.1 0 2-.9 2-2s-.9-2-2-2-2 .9-2 2 .9 2 2 2zm0 2c-1.1 0-2 .9-2 2s.9 2 2 2 2-.9 2-2-.9-2-2-2zm0 6c-1.1 0-2 .9-2 2s.9 2 2 2 2-.9 2-2-.9-2-2-2z"/></svg>
<div class="a" style="left:227.2px;top:475.30px;width:29.8px;height:29.8px;border-radius:50%;border:1.9px solid #2b7de0;background:#c6d82c"></div>
<svg class="a" style="left:235.6px;top:481.50px" width="13" height="18" viewBox="0 0 13 18"><path d="M10.3 1.7 H3.3 L2.6 8.3 C3.6 7.6 4.8 7.3 6.2 7.3 C8.9 7.3 10.8 9.1 10.8 11.8 C10.8 14.6 8.8 16.3 6.1 16.3 C4.3 16.3 2.8 15.7 1.7 14.4" fill="none" stroke="#6a83c6" stroke-width="3.1" stroke-linecap="round" stroke-linejoin="round"/></svg>
<div class="a t" style="left:269.50px;top:484.06px;font-size:10.5px;line-height:13.65px;color:#3c3c3c;font-weight:normal;font-style:normal;transform:scaleX(0.9885)">How can we Award Badges?</div>
<div class="a t" style="left:227.20px;top:512.46px;font-size:10.5px;line-height:13.65px;color:#9e9e9e;font-weight:normal;font-style:italic;transform:scaleX(0.9785)">No objectives</div>
<svg class="a" style="left:546.40px;top:482.60px" width="16.6" height="16.6" viewBox="0 0 24 24"><path fill="rgba(0,0,0,.47)" d="M12 4.5C7 4.5 2.73 7.61 1 12c1.73 4.39 6 7.5 11 7.5s9.27-3.11 11-7.5c-1.73-4.39-6-7.5-11-7.5zM12 17c-2.76 0-5-2.24-5-5s2.24-5 5-5 5 2.24 5 5-2.24 5-5 5zm0-8c-1.66 0-3 1.34-3 3s1.34 3 3 3 3-1.34 3-3-1.34-3-3-3z"/><circle cx="10.9" cy="10.7" r="1.3" fill="#fff"/></svg>
<svg class="a" style="left:577.20px;top:483.60px" width="14.6" height="14.6" viewBox="0 0 24 24"><path fill="rgba(0,0,0,.47)" d="M3 17.25V21h3.75L17.81 9.94l-3.75-3.75L3 17.25zM20.71 7.04c.39-.39.39-1.02 0-1.41l-2.34-2.34c-.39-.39-1.02-.39-1.41 0l-1.83 1.83 3.75 3.75 1.83-1.83z"/></svg>
<svg class="a" style="left:607.65px;top:483.65px" width="14.5" height="14.5" viewBox="0 0 24 24"><path fill="rgba(0,0,0,.47)" d="M12 8c1.1 0 2-.9 2-2s-.9-2-2-2-2 .9-2 2 .9 2 2 2zm0 2c-1.1 0-2 .9-2 2s.9 2 2 2 2-.9 2-2-.9-2-2-2zm0 6c-1.1 0-2 .9-2 2s.9 2 2 2 2-.9 2-2-.9-2-2-2z"/></svg>
<svg class="a" style="left:199.20px;top:547.50px" width="17" height="17" viewBox="0 0 24 24"><path fill="#222" d="M10 6L8.59 7.41 13.17 12l-4.58 4.59L10 18l6-6z"/></svg>
<div class="a" style="left:227.2px;top:540.30px;width:29.8px;height:29.8px;border-radius:3.5px;border:1.9px solid #2b7de0;background:#6a83c6"></div>
<svg class="a" style="left:235.6px;top:546.50px" width="13" height="18" viewBox="0 0 13 18"><path d="M8.4 1.6 L3.2 10 M6.3 8 C8.8 8 10.6 9.8 10.6 12.2 C10.6 14.6 8.8 16.3 6.3 16.3 C3.8 16.3 2 14.6 2 12.2 C2 9.8 3.8 8 6.3 8 Z" fill="none" stroke="#c6d82c" stroke-width="3.1" stroke-linecap="round" stroke-linejoin="round"/></svg>
<div class="a t" style="left:269.50px;top:549.06px;font-size:10.5px;line-height:13.65px;color:#3c3c3c;font-weight:normal;font-style:normal;transform:scaleX(0.9822)">Graded and Non-Graded Activity Examples</div>
<div class="a t" style="left:227.20px;top:577.46px;font-size:10.5px;line-height:13.65px;color:#9e9e9e;font-weight:normal;font-style:italic;transform:scaleX(0.9785)">No objectives</div>
<svg class="a" style="left:517.40px;top:548.80px" width="14.2" height="14.2" viewBox="0 0 24 24"><path fill="rgba(0,0,0,.47)" d="M12 2C6.48 2 2 6.48 2 12s4.48 10 10 10 10-4.48 10-10S17.52 2 12 2zm5 11h-4v4h-2v-4H7v-2h4V7h2v4h4v2z"/></svg>
<svg class="a" style="left:546.40px;top:547.60px" width="16.6" height="16.6" viewBox="0 0 24 24"><path fill="rgba(0,0,0,.47)" d="M12 4.5C7 4.5 2.73 7.61 1 12c1.73 4.39 6 7.5 11 7.5s9.27-3.11 11-7.5c-1.73-4.39-6-7.5-11-7.5zM12 17c-2.76 0-5-2.24-5-5s2.24-5 5-5 5 2.24 5 5-2.24 5-5 5zm0-8c-1.66 0-3 1.34-3 3s1.34 3 3 3 3-1.34 3-3-1.34-3-3-3z"/><circle cx="10.9" cy="10.7" r="1.3" fill="#fff"/></svg>
<svg class="a" style="left:577.20px;top:548.60px" width="14.6" height="14.6" viewBox="0 0 24 24"><path fill="rgba(0,0,0,.47)" d="M3 17.25V21h3.75L17.81 9.94l-3.75-3.75L3 17.25zM20.71 7.04c.39-.39.39-1.02 0-1.41l-2.34-2.34c-.39-.39-1.02-.39-1.41 0l-1.83 1.83 3.75 3.75 1.83-1.83z"/></svg>
<svg class="a" style="left:607.65px;top:548.65px" width="14.5" height="14.5" viewBox="0 0 24 24"><path fill="rgba(0,0,0,.47)" d="M12 8c1.1 0 2-.9 2-2s-.9-2-2-2-2 .9-2 2 .9 2 2 2zm0 2c-1.1 0-2 .9-2 2s.9 2 2 2 2-.9 2-2-.9-2-2-2zm0 6c-1.1 0-2 .9-2 2s.9 2 2 2 2-.9 2-2-.9-2-2-2z"/></svg>
<svg class="a" style="left:199.20px;top:612.40px" width="17" height="17" viewBox="0 0 24 24"><path fill="#222" d="M10 6L8.59 7.41 13.17 12l-4.58 4.59L10 18l6-6z"/></svg>
<svg class="a" style="left:226.8px;top:604.80px" width="30.6" height="30.6" viewBox="0 0 30 30"><defs><clipPath id="gc"><rect x="1" y="1" width="28" height="28" rx="2.5"/></clipPath></defs><g clip-path="url(#gc)"><rect width="30" height="30" fill="#f7f7f7"/><path d="M0 0h4v5l2 2 1-3 3-1V0z" fill="#5b7fc8"/><path d="M5 0h6l-1 3-3 1 1 2-2 1z" fill="#4d8fe0"/><path d="M11 0h8v4l-2 1-3-1-3 1z" fill="#4fc3a1"/><path d="M19 0h10v3l-3 2-3 3-2-2-2-2z" fill="#f9a825"/><path d="M25 19l4-2v7l-3-2z" fill="#f57c00"/><path d="M1 22h6v7H1z" fill="#fbb02d"/><path d="M2.5 24h3v2h-3z" fill="#f6d06a"/><path d="M11 23l4-1 4 3-1 4h-5z" fill="#4fc3a1"/><path d="M21 22h5v7h-5z" fill="#26a270"/><circle cx="23.5" cy="26" r="1.3" fill="#7fd0b0"/><path d="M3 8q3-3 7-2q4-3 9 0q5-1 7 3q2 4-1 8q-1 4-7 4q-4 3-9 1q-5 0-6-5q-2-5 0-9z" fill="#fff"/><g transform="translate(6.4 14.2)" fill="none" stroke-width="1.2"><circle r="2.3" stroke="#4285f4" stroke-dasharray="1.8 30"/><circle r="2.3" stroke="#34a853" stroke-dasharray="0 1.8 3.61 30"/><circle r="2.3" stroke="#fbbc05" stroke-dasharray="0 5.41 3.61 30"/><circle r="2.3" stroke="#ea4335" stroke-dasharray="0 9.02 3.61 30"/><path d="M0 0h2.3" stroke="#4285f4" stroke-width="1.1"/></g></g><rect x="1" y="1" width="28" height="28" rx="2.5" fill="none" stroke="#1f74e0" stroke-width="1.9"/></svg>
<div class="a t" style="left:237.20px;top:613.93px;font-size:8.5px;line-height:11.05px;color:#333;font-weight:bold;font-style:normal;transform:scaleX(0.6640)">Suite</div>
<div class="a t" style="left:269.50px;top:613.96px;font-size:10.5px;line-height:13.65px;color:#3c3c3c;font-weight:normal;font-style:normal;transform:scaleX(0.9884)">Google G-Suite / Drive and Zoom Integration for...</div>
<div class="a t" style="left:227.20px;top:642.36px;font-size:10.5px;line-height:13.65px;color:#9e9e9e;font-weight:normal;font-style:italic;transform:scaleX(0.9785)">No objectives</div>
<svg class="a" style="left:517.40px;top:613.70px" width="14.2" height="14.2" viewBox="0 0 24 24"><path fill="rgba(0,0,0,.47)" d="M12 2C6.48 2 2 6.48 2 12s4.48 10 10 10 10-4.48 10-10S17.52 2 12 2zm5 11h-4v4h-2v-4H7v-2h4V7h2v4h4v2z"/></svg>
<svg class="a" style="left:546.40px;top:612.50px" width="16.6" height="16.6" viewBox="0 0 24 24"><path fill="rgba(0,0,0,.47)" d="M12 4.5C7 4.5 2.73 7.61 1 12c1.73 4.39 6 7.5 11 7.5s9.27-3.11 11-7.5c-1.73-4.39-6-7.5-11-7.5zM12 17c-2.76 0-5-2.24-5-5s2.24-5 5-5 5 2.24 5 5-2.24 5-5 5zm0-8c-1.66 0-3 1.34-3 3s1.34 3 3 3 3-1.34 3-3-1.34-3-3-3z"/><circle cx="10.9" cy="10.7" r="1.3" fill="#fff"/></svg>
<svg class="a" style="left:577.20px;top:613.50px" width="14.6" height="14.6" viewBox="0 0 24 24"><path fill="rgba(0,0,0,.47)" d="M3 17.25V21h3.75L17.81 9.94l-3.75-3.75L3 17.25zM20.71 7.04c.39-.39.39-1.02 0-1.41l-2.34-2.34c-.39-.39-1.02-.39-1.41 0l-1.83 1.83 3.75 3.75 1.83-1.83z"/></svg>
<svg class="a" style="left:607.65px;top:613.55px" width="14.5" height="14.5" viewBox="0 0 24 24"><path fill="rgba(0,0,0,.47)" d="M12 8c1.1 0 2-.9 2-2s-.9-2-2-2-2 .9-2 2 .9 2 2 2zm0 2c-1.1 0-2 .9-2 2s.9 2 2 2 2-.9 2-2-.9-2-2-2zm0 6c-1.1 0-2 .9-2 2s.9 2 2 2 2-.9 2-2-.9-2-2-2z"/></svg>
<div class="a" style="left:210.1px;top:676.7px;width:15.7px;height:15.7px;border-radius:50%;background:#9c27b0"></div>
<div class="a" style="left:214.2px;top:683.7px;width:7.5px;height:1.8px;background:#fff"></div>
<div class="a" style="left:217.05px;top:680.8px;width:1.8px;height:7.5px;background:#fff"></div>
<div class="a t" style="left:231.90px;top:678.06px;font-size:10.5px;line-height:13.65px;color:#9c27b0;font-weight:normal;font-style:normal;transform:scaleX(0.9579);-webkit-text-stroke:0.45px #9c27b0">ADD ACTIVITY</div>
<svg class="a" style="left:647.35px;top:92.15px" width="17.5" height="17.5" viewBox="0 0 24 24"><path fill="#9e9e9e" d="M12 10c-1.1 0-2 .9-2 2s.9 2 2 2 2-.9 2-2-.9-2-2-2zm7-7H5c-1.11 0-2 .9-2 2v14c0 1.1.89 2 2 2h14c1.11 0 2-.9 2-2V5c0-1.1-.89-2-2-2zm-1.75 9c0 .23-.02.46-.05.68l1.48 1.16c.13.11.17.3.08.45l-1.4 2.42c-.09.15-.27.21-.43.15l-1.74-.7c-.36.28-.76.51-1.18.69l-.26 1.85c-.03.17-.18.3-.35.3h-2.8c-.17 0-.32-.13-.35-.29l-.26-1.850c-.43-.18-.82-.41-1.18-.69l-1.74.7c-.16.06-.34 0-.43-.15l-1.4-2.42c-.09-.15-.05-.34.08-.45l1.48-1.16c-.03-.23-.05-.46-.05-.69 0-.23.02-.46.05-.68l-1.48-1.16c-.13-.11-.17-.3-.08-.45l1.4-2.42c.09-.15.27-.21.43-.15l1.74.7c.36-.28.76-.51 1.18-.69l.26-1.85c.03-.17.18-.3.35-.3h2.8c.17 0 .32.13.35.29l.26 1.85c.43.18.82.41 1.18.69l1.74-.7c.16-.06.34 0 .43.15l1.4 2.42c.09.15.05.34-.08.45l-1.48 1.16c.03.23.05.46.05.69z"/></svg>
<svg class="a" style="left:688.15px;top:90.65px" width="19.5" height="19.5" viewBox="0 0 24 24"><path fill="#6e6e6e" d="M6 2c-1.1 0-1.99.9-1.99 2L4 20c0 1.1.89 2 1.99 2H18c1.1 0 2-.9 2-2V8l-6-6H6zm7 7V3.5L18.5 9H13z"/></svg>
<svg class="a" style="left:730.80px;top:91.50px" width="18.2" height="18.2" viewBox="0 0 24 24"><path fill="#a2a2a2" d="M4 6H2v14c0 1.1.9 2 2 2h14v-2H4V6zm16-4H8c-1.1 0-2 .9-2 2v12c0 1.1.9 2 2 2h12c1.1 0 2-.9 2-2V4c0-1.1-.9-2-2-2zm0 10l-2.5-1.5L15 12V4h5v8z"/></svg>
<div class="a" style="left:676.6px;top:117px;width:42.4px;height:2px;background:#9c27b0"></div>
<div class="a" style="left:635px;top:119px;width:193px;height:1px;background:#eee"></div>
<div class="a" style="left:771px;top:133px;width:15.4px;height:15.4px;border-radius:50%;background:#111"></div>
<div class="a" style="left:774.8px;top:140px;width:8px;height:1.6px;background:#fff"></div>
<div class="a" style="left:778px;top:136.8px;width:1.6px;height:8px;background:#fff"></div>
<svg class="a" style="left:799.80px;top:131.60px" width="18" height="18" viewBox="0 0 24 24"><path fill="#111" d="M12 8c1.1 0 2-.9 2-2s-.9-2-2-2-2 .9-2 2 .9 2 2 2zm0 2c-1.1 0-2 .9-2 2s.9 2 2 2 2-.9 2-2-.9-2-2-2zm0 6c-1.1 0-2 .9-2 2s.9 2 2 2 2-.9 2-2-.9-2-2-2z"/></svg>
<div class="a" style="left:640px;top:157.8px;width:184px;height:39px;border:1px solid #e2e2e2;border-radius:4px"></div>
<div class="a" style="left:645.5px;top:156px;width:29px;height:4px;background:#fff"></div>
<div class="a t" style="left:648.60px;top:154.52px;font-size:8px;line-height:10.4px;color:#959595;font-weight:normal;font-style:normal;transform:scaleX(0.9840)">Folder</div>
<div class="a t" style="left:648.80px;top:173.86px;font-size:10.5px;line-height:13.65px;color:#333;font-weight:normal;font-style:normal;transform:scaleX(0.9799)">Resources</div>
<svg class="a" style="left:805.5px;top:174.5px" width="7.5" height="4.3" viewBox="0 0 7.5 4.3"><path d="M0 0h7.5L3.75 4.3z" fill="#757575"/></svg>
<div class="a" style="left:640px;top:207px;width:184px;height:39px;border:1px solid #e2e2e2;border-radius:4px"></div>
<div class="a t" style="left:648.60px;top:220.66px;font-size:10.5px;line-height:13.65px;color:#868686;font-weight:normal;font-style:normal;transform:scaleX(1.0060)">Filter</div>
<div class="a" style="left:819px;top:262px;width:9px;height:461px;background:#f1f1f1"></div>
<div class="a" style="left:819.5px;top:271px;width:8.5px;height:106px;background:#c1c1c1"></div>
<svg class="a" style="left:821px;top:264px" width="6" height="3.5" viewBox="0 0 6 3.5"><path d="M0 3.5h6L3 0z" fill="#a0a0a0"/></svg>
<svg class="a" style="left:821px;top:715px" width="6" height="3.5" viewBox="0 0 6 3.5"><path d="M0 0h6L3 3.5z" fill="#505050"/></svg>
<div class="a t" style="left:647.00px;top:274.43px;font-size:9px;line-height:11.7px;color:#2a2a2a;font-weight:normal;font-style:normal;transform:scaleX(1.0200);-webkit-text-stroke:0.5px #2a2a2a">1putinorder.png</div>
<div class="a t" style="left:647.00px;top:286.63px;font-size:9px;line-height:11.7px;color:#5e5e5e;font-weight:normal;font-style:normal;transform:scaleX(0.9624)">60.9 KB, Oct 7, 2022</div>
<svg class="a" style="left:794.75px;top:277.25px" width="17.5" height="17.5" viewBox="0 0 24 24"><path fill="#111" d="M12 8c1.1 0 2-.9 2-2s-.9-2-2-2-2 .9-2 2 .9 2 2 2zm0 2c-1.1 0-2 .9-2 2s.9 2 2 2 2-.9 2-2-.9-2-2-2zm0 6c-1.1 0-2 .9-2 2s.9 2 2 2 2-.9 2-2-.9-2-2-2z"/></svg>
<div class="a t" style="left:647.00px;top:319.58px;font-size:9px;line-height:11.7px;color:#2a2a2a;font-weight:normal;font-style:normal;transform:scaleX(1.0200);-webkit-text-stroke:0.5px #2a2a2a">2putinorder.png</div>
<div class="a t" style="left:647.00px;top:331.78px;font-size:9px;line-height:11.7px;color:#5e5e5e;font-weight:normal;font-style:normal;transform:scaleX(0.9624)">45.9 KB, Oct 7, 2022</div>
<svg class="a" style="left:794.75px;top:322.40px" width="17.5" height="17.5" viewBox="0 0 24 24"><path fill="#111" d="M12 8c1.1 0 2-.9 2-2s-.9-2-2-2-2 .9-2 2 .9 2 2 2zm0 2c-1.1 0-2 .9-2 2s.9 2 2 2 2-.9 2-2-.9-2-2-2zm0 6c-1.1 0-2 .9-2 2s.9 2 2 2 2-.9 2-2-.9-2-2-2z"/></svg>
<div class="a t" style="left:647.00px;top:364.73px;font-size:9px;line-height:11.7px;color:#2a2a2a;font-weight:normal;font-style:normal;transform:scaleX(1.0200);-webkit-text-stroke:0.5px #2a2a2a">3putinorder.png</div>
<div class="a t" style="left:647.00px;top:376.93px;font-size:9px;line-height:11.7px;color:#5e5e5e;font-weight:normal;font-style:normal;transform:scaleX(0.9624)">56.7 KB, Oct 7, 2022</div>
<svg class="a" style="left:794.75px;top:367.55px" width="17.5" height="17.5" viewBox="0 0 24 24"><path fill="#111" d="M12 8c1.1 0 2-.9 2-2s-.9-2-2-2-2 .9-2 2 .9 2 2 2zm0 2c-1.1 0-2 .9-2 2s.9 2 2 2 2-.9 2-2-.9-2-2-2zm0 6c-1.1 0-2 .9-2 2s.9 2 2 2 2-.9 2-2-.9-2-2-2z"/></svg>
<div class="a t" style="left:647.00px;top:409.88px;font-size:9px;line-height:11.7px;color:#2a2a2a;font-weight:normal;font-style:normal;transform:scaleX(1.0200);-webkit-text-stroke:0.5px #2a2a2a">4putinorder.png</div>
<div class="a t" style="left:647.00px;top:422.08px;font-size:9px;line-height:11.7px;color:#5e5e5e;font-weight:normal;font-style:normal;transform:scaleX(0.9624)">48.3 KB, Oct 7, 2022</div>
<svg class="a" style="left:794.75px;top:412.70px" width="17.5" height="17.5" viewBox="0 0 24 24"><path fill="#111" d="M12 8c1.1 0 2-.9 2-2s-.9-2-2-2-2 .9-2 2 .9 2 2 2zm0 2c-1.1 0-2 .9-2 2s.9 2 2 2 2-.9 2-2-.9-2-2-2zm0 6c-1.1 0-2 .9-2 2s.9 2 2 2 2-.9 2-2-.9-2-2-2z"/></svg>
<div class="a t" style="left:647.00px;top:455.03px;font-size:9px;line-height:11.7px;color:#2a2a2a;font-weight:normal;font-style:normal;transform:scaleX(1.0001);-webkit-text-stroke:0.5px #2a2a2a">4SCI-U02-L01-Tarantula.jpg</div>
<div class="a t" style="left:647.00px;top:467.23px;font-size:9px;line-height:11.7px;color:#5e5e5e;font-weight:normal;font-style:normal;transform:scaleX(0.9708)">69.1 KB, Mar 23, 2023</div>
<svg class="a" style="left:794.75px;top:457.85px" width="17.5" height="17.5" viewBox="0 0 24 24"><path fill="#111" d="M12 8c1.1 0 2-.9 2-2s-.9-2-2-2-2 .9-2 2 .9 2 2 2zm0 2c-1.1 0-2 .9-2 2s.9 2 2 2 2-.9 2-2-.9-2-2-2zm0 6c-1.1 0-2 .9-2 2s.9 2 2 2 2-.9 2-2-.9-2-2-2z"/></svg>
<div class="a t" style="left:647.00px;top:500.18px;font-size:9px;line-height:11.7px;color:#2a2a2a;font-weight:normal;font-style:normal;transform:scaleX(0.9942);-webkit-text-stroke:0.5px #2a2a2a">4SCI-U02-L01-VertebrateDiagra...</div>
<div class="a t" style="left:647.00px;top:512.38px;font-size:9px;line-height:11.7px;color:#5e5e5e;font-weight:normal;font-style:normal;transform:scaleX(0.9729)">128.1 KB, Mar 23, 2023</div>
<svg class="a" style="left:794.75px;top:503.00px" width="17.5" height="17.5" viewBox="0 0 24 24"><path fill="#111" d="M12 8c1.1 0 2-.9 2-2s-.9-2-2-2-2 .9-2 2 .9 2 2 2zm0 2c-1.1 0-2 .9-2 2s.9 2 2 2 2-.9 2-2-.9-2-2-2zm0 6c-1.1 0-2 .9-2 2s.9 2 2 2 2-.9 2-2-.9-2-2-2z"/></svg>
<div class="a t" style="left:647.00px;top:545.33px;font-size:9px;line-height:11.7px;color:#2a2a2a;font-weight:normal;font-style:normal;transform:scaleX(0.9881);-webkit-text-stroke:0.5px #2a2a2a">4SCI-U02-L01-Zebra.jpg</div>
<div class="a t" style="left:647.00px;top:557.53px;font-size:9px;line-height:11.7px;color:#5e5e5e;font-weight:normal;font-style:normal;transform:scaleX(0.9708)">85.7 KB, Mar 23, 2023</div>
<svg class="a" style="left:794.75px;top:548.15px" width="17.5" height="17.5" viewBox="0 0 24 24"><path fill="#111" d="M12 8c1.1 0 2-.9 2-2s-.9-2-2-2-2 .9-2 2 .9 2 2 2zm0 2c-1.1 0-2 .9-2 2s.9 2 2 2 2-.9 2-2-.9-2-2-2zm0 6c-1.1 0-2 .9-2 2s.9 2 2 2 2-.9 2-2-.9-2-2-2z"/></svg>
<div class="a t" style="left:647.00px;top:590.49px;font-size:9px;line-height:11.7px;color:#2a2a2a;font-weight:normal;font-style:normal;transform:scaleX(1.0063);-webkit-text-stroke:0.5px #2a2a2a">amber.png</div>
<div class="a t" style="left:647.00px;top:602.69px;font-size:9px;line-height:11.7px;color:#5e5e5e;font-weight:normal;font-style:normal;transform:scaleX(0.9651)">337.4 KB, Oct 7, 2022</div>
<svg class="a" style="left:794.75px;top:593.30px" width="17.5" height="17.5" viewBox="0 0 24 24"><path fill="#111" d="M12 8c1.1 0 2-.9 2-2s-.9-2-2-2-2 .9-2 2 .9 2 2 2zm0 2c-1.1 0-2 .9-2 2s.9 2 2 2 2-.9 2-2-.9-2-2-2zm0 6c-1.1 0-2 .9-2 2s.9 2 2 2 2-.9 2-2-.9-2-2-2z"/></svg>
<div class="a t" style="left:647.00px;top:635.63px;font-size:9px;line-height:11.7px;color:#2a2a2a;font-weight:normal;font-style:normal;transform:scaleX(1.0079);-webkit-text-stroke:0.5px #2a2a2a">babies.png</div>
<div class="a t" style="left:647.00px;top:647.84px;font-size:9px;line-height:11.7px;color:#5e5e5e;font-weight:normal;font-style:normal;transform:scaleX(0.9729)">463.2 KB, Mar 23, 2023</div>
<svg class="a" style="left:794.75px;top:638.45px" width="17.5" height="17.5" viewBox="0 0 24 24"><path fill="#111" d="M12 8c1.1 0 2-.9 2-2s-.9-2-2-2-2 .9-2 2 .9 2 2 2zm0 2c-1.1 0-2 .9-2 2s.9 2 2 2 2-.9 2-2-.9-2-2-2zm0 6c-1.1 0-2 .9-2 2s.9 2 2 2 2-.9 2-2-.9-2-2-2z"/></svg>
<div class="a t" style="left:647.00px;top:680.78px;font-size:9px;line-height:11.7px;color:#2a2a2a;font-weight:normal;font-style:normal;transform:scaleX(1.0159);-webkit-text-stroke:0.5px #2a2a2a">bannerwelcomeschool.png</div>
<div class="a t" style="left:647.00px;top:692.99px;font-size:9px;line-height:11.7px;color:#5e5e5e;font-weight:normal;font-style:normal;transform:scaleX(0.9714)">140.1 KB, Jun 6, 2021</div>
<svg class="a" style="left:794.75px;top:683.60px" width="17.5" height="17.5" viewBox="0 0 24 24"><path fill="#111" d="M12 8c1.1 0 2-.9 2-2s-.9-2-2-2-2 .9-2 2 .9 2 2 2zm0 2c-1.1 0-2 .9-2 2s.9 2 2 2 2-.9 2-2-.9-2-2-2zm0 6c-1.1 0-2 .9-2 2s.9 2 2 2 2-.9 2-2-.9-2-2-2z"/></svg>
<div class="a" style="left:635px;top:722.5px;width:193px;height:1px;background:#e8e8e8"></div>
<svg class="a" style="left:641.30px;top:730.50px" width="17" height="17" viewBox="0 0 24 24"><path fill="#222" d="M10 6L8.59 7.41 13.17 12l-4.58 4.59L10 18l6-6z"/></svg>
</body></html>
